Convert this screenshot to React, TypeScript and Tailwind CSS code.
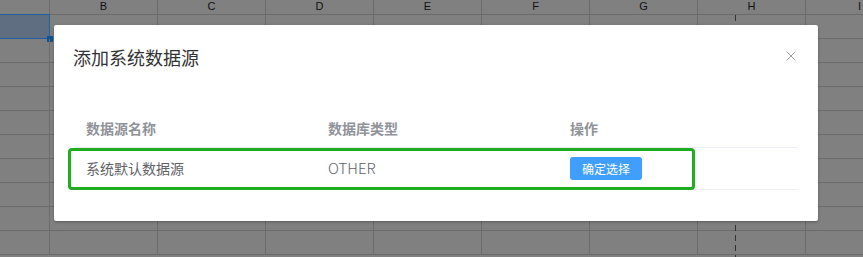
import { X } from 'lucide-react';

const columns = ['A', 'B', 'C', 'D', 'E', 'F', 'G', 'H', 'I'];
const rowCount = 10;

const Sheet = () => {
  return (
    <div className="-ml-[58px] font-['Liberation_Sans',sans-serif]">
      <div className="flex h-[15px] border-b border-[#6b6b6b]">
        {columns.map((c) => (
          <div
            key={c}
            className="w-[108px] shrink-0 border-r border-[#6b6b6b] text-center text-[11px] leading-[12px] text-[#111]"
          >
            {c}
          </div>
        ))}
      </div>
      {Array.from({ length: rowCount }).map((_, r) => (
        <div key={r} className="flex h-[24px] border-b border-[#6b6b6b]">
          {columns.map((c, i) => (
            <div
              key={c}
              className={`relative w-[108px] shrink-0 border-r border-[#6b6b6b] ${
                r === 0 && i === 0 ? 'bg-[#5f6e80]' : ''
              }`}
            >
              {r === 0 && i === 0 && (
                <>
                  <div className="absolute -top-px left-0 right-[-1px] bottom-[-1px] border border-[#225f9e]" />
                  <div className="absolute right-[-4px] bottom-[-4px] size-[6px] bg-[#0f5392]" />
                </>
              )}
            </div>
          ))}
        </div>
      ))}
    </div>
  );
};

const DataSourceDialog = () => {
  return (
    <div className="relative ml-[54px] mt-[25px] w-[764px] rounded-[2px] bg-white shadow-[0_1px_3px_rgba(0,0,0,0.3)] font-['Noto_Sans_CJK_SC','Liberation_Sans',sans-serif]">
      <div className="px-[19px] pt-[20px] pb-[10px]">
        <h2 className="text-[18px] leading-[24px] text-[#303133]">添加系统数据源</h2>
      </div>
      <button className="absolute left-[729px] top-[23px] text-[#909399]">
        <X size={16} strokeWidth={1.4} />
      </button>
      <div className="px-[20px] pt-[30px] pb-[31px]">
        <div className="grid grid-cols-[242px_242px_240px] h-[39px] items-center border-b border-[#ebeef5] text-[14px] font-bold text-[#909399]">
          <div className="pl-[12px]">数据源名称</div>
          <div className="pl-[12px]">数据库类型</div>
          <div className="pl-[12px]">操作</div>
        </div>
        <div className="grid grid-cols-[242px_242px_240px] h-[42px] items-center border-b border-[#ebeef5] text-[14px] text-[#606266]">
          <div className="pl-[12px]">系统默认数据源</div>
          <div className="pl-[12px] text-[15px] font-light">OTHER</div>
          <div className="pl-[12px]">
            <button className="h-[23px] w-[72px] rounded-[3px] bg-[#409eff] text-[12px] leading-[23px] text-white">
              确定选择
            </button>
          </div>
        </div>
      </div>
      <div className="absolute left-[14px] top-[123px] h-[42px] w-[627px] rounded-[4px] border-[3px] border-[#20ac20]" />
    </div>
  );
};

export default function App() {
  return (
    <div className="relative h-[257px] w-[863px] overflow-hidden bg-[#808080]">
      <Sheet />
      <svg className="absolute left-[735px] top-[15px]" width="1" height="242">
        <line x1="0.5" y1="0" x2="0.5" y2="242" stroke="#333" strokeWidth="1" strokeDasharray="6 4" />
      </svg>
      <div className="absolute inset-0">
        <DataSourceDialog />
      </div>
    </div>
  );
}
